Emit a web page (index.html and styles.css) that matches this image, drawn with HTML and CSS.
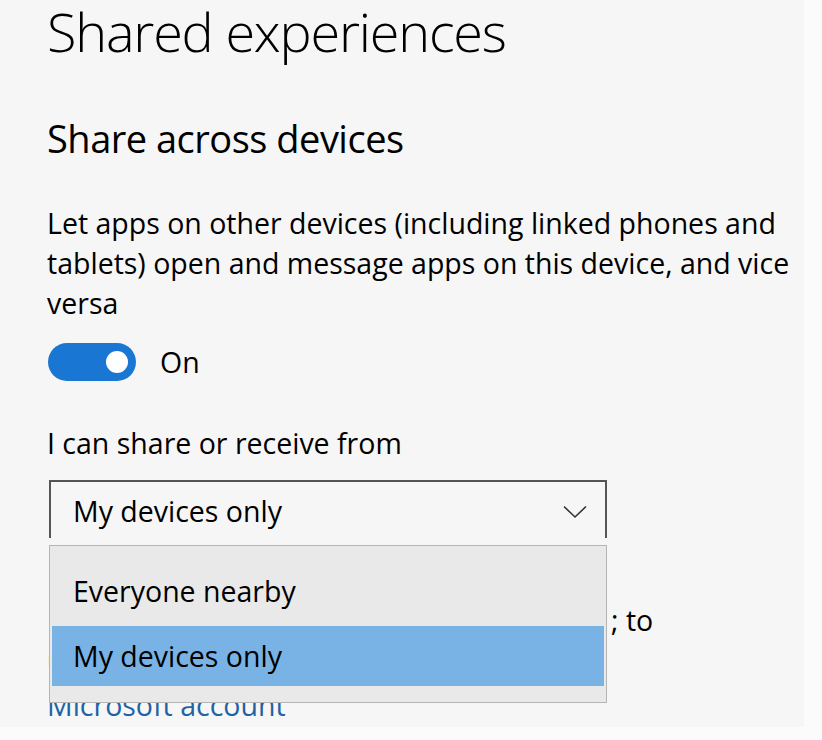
FILE: index.html
```html
<!DOCTYPE html>
<html lang="en">
<head>
<meta charset="utf-8">
<title>Shared experiences</title>
<link rel="stylesheet" href="styles.css">
</head>
<body>
<div class="page">
  <h1 class="title">Shared experiences</h1>
  <h2 class="subtitle">Share across devices</h2>
  <p class="desc">Let apps on other devices (including linked phones and tablets) open and message apps on this device, and vice versa</p>
  <div class="toggle-row">
    <span class="toggle"><span class="knob"></span></span>
    <span class="toggle-label">On</span>
  </div>
  <p class="label">I can share or receive from</p>
  <div class="combo-wrap">
    <div class="combo">
      <span class="combo-value">My devices only</span>
      <svg class="chevron" width="24" height="14" viewBox="0 0 24 14"><path d="M1 1.5 L12 12 L23 1.5" fill="none" stroke="#333" stroke-width="1.6"/></svg>
    </div>
    <ul class="popup">
      <li class="option">Everyone nearby</li>
      <li class="option selected">My devices only</li>
    </ul>
  </div>
  <p class="note"><span class="note-hidden">Only devices signed in with the same</span>; to<br>use the same account on each device</p>
  <a class="link" href="#">Microsoft account</a>
</div>
</body>
</html>
```
FILE: styles.css
```css
html, body {
  margin: 0;
  padding: 0;
}
body {
  background: #fbfbfb;
  font-family: "Open Sans", "Noto Sans", sans-serif;
  color: #000;
}
.page {
  width: 804px;
  height: 727px;
  background: #f6f6f6;
  padding-left: 47px;
  box-sizing: border-box;
  overflow: hidden;
}
.title {
  margin: 0;
  padding-top: 1px;
  font-size: 54px;
  line-height: 60px;
  font-weight: 300;
  letter-spacing: -1.2px;
}
.subtitle {
  margin: 53px 0 0;
  font-size: 38px;
  line-height: 48px;
  font-weight: 400;
  letter-spacing: -0.5px;
}
.desc {
  margin: 41px 0 0;
  width: 760px;
  font-size: 28.5px;
  line-height: 40px;
}
.toggle-row {
  margin-top: 19px;
  margin-left: 1px;
  display: flex;
  align-items: center;
  gap: 24px;
}
.toggle {
  width: 88px;
  height: 38px;
  border-radius: 19px;
  background: #1976d2;
  display: flex;
  align-items: center;
  justify-content: flex-end;
  padding-right: 8px;
  box-sizing: border-box;
}
.knob {
  width: 22px;
  height: 22px;
  border-radius: 50%;
  background: #fff;
}
.toggle-label {
  font-size: 28.5px;
  line-height: 40px;
}
.label {
  margin: 41px 0 0;
  font-size: 28.5px;
  line-height: 40px;
}
.combo-wrap {
  position: relative;
  margin-top: 17px;
  margin-left: 2px;
  width: 558px;
}
.combo {
  height: 58px;
  border: 2px solid #555;
  border-bottom: none;
  box-sizing: border-box;
  display: flex;
  align-items: center;
  justify-content: space-between;
  padding: 0 18px 0 22px;
}
.combo-value {
  font-size: 28.5px;
  line-height: 40px;
  padding-top: 1px;
}
.chevron {
  margin-top: 4px;
}
.popup {
  position: absolute;
  left: 0;
  top: 65px;
  width: 558px;
  height: 158px;
  box-sizing: border-box;
  margin: 0;
  padding: 15px 2px 0;
  list-style: none;
  background: #e9e9e9;
  border: 1px solid #b5b5b5;
  display: flex;
  flex-direction: column;
  gap: 5px;
}
.option {
  height: 60px;
  padding-left: 21px;
  font-size: 28.5px;
  line-height: 60px;
}
.selected {
  background: #79b3e5;
}
.note {
  margin: 62px 0 0;
  font-size: 28.5px;
  line-height: 40px;
}
.note-hidden {
  display: inline-block;
  width: 564px;
  padding-left: 4px;
  box-sizing: border-box;
  white-space: nowrap;
  overflow: hidden;
  vertical-align: bottom;
}
.link {
  display: block;
  margin-top: 5px;
  font-size: 28.5px;
  line-height: 40px;
  color: #1f62a5;
  text-decoration: none;
}
```
